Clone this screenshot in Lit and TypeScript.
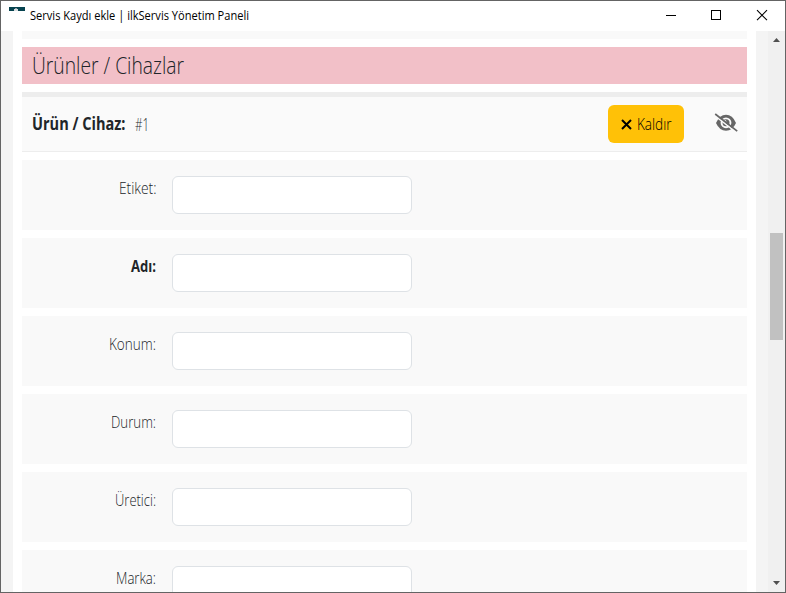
import { LitElement, html, css, svg } from "lit";
import { customElement, property } from "lit/decorators.js";

/* Single line of condensed text, set to an exact advance width. */
@customElement("narrow-text")
class NarrowText extends LitElement {
  @property() text = "";
  @property({ type: Number }) width = 100;
  @property({ type: Number }) size = 16;
  @property({ type: Number }) weight = 300;
  static styles = css`
    :host { display: block; flex: none; }
    svg { display: block; overflow: visible; }
    text { font-family: "Open Sans", "Noto Sans", sans-serif; fill: currentColor; }
  `;
  render() {
    const h = Math.round(this.size * 1.5);
    return html`<svg width=${this.width} height=${h}>${svg`<text x="0" y=${h - Math.round(this.size * 0.4)}
      font-size=${this.size} font-weight=${this.weight} textLength=${this.width}
      lengthAdjust="spacingAndGlyphs">${this.text}</text>`}</svg>`;
  }
}

@customElement("form-row")
class FormRow extends LitElement {
  @property() label = "";
  @property({ type: Number }) width = 40;
  @property({ type: Boolean }) required = false;
  static styles = css`
    :host { display: flex; flex: none; box-sizing: border-box; height: 70px; padding-top: 16px; background: #f9f9f9; color: #212529; }
    .label { width: 134px; margin-right: 16px; display: flex; justify-content: flex-end; }
    .field { box-sizing: border-box; width: 240px; height: 38px; margin: 0; border: 1px solid #dee2e6; border-radius: 6px; background: #fff; outline: none; }
  `;
  render() {
    return html`
      <div class="label"><narrow-text .text=${this.label} .width=${this.width} .weight=${this.required ? 700 : 300}></narrow-text></div>
      <input class="field" type="text" aria-label=${this.label} />`;
  }
}

const ROWS = [
  { label: "Etiket:", width: 37.5 },
  { label: "Adı:", width: 25, required: true },
  { label: "Konum:", width: 47 },
  { label: "Durum:", width: 45 },
  { label: "Üretici:", width: 41 },
  { label: "Marka:", width: 40 },
];

@customElement("app-root")
class AppRoot extends LitElement {
  static styles = css`
    :host { display: block; }
    .window { box-sizing: border-box; width: 786px; height: 593px; border: 1px solid #646464; background: #fff; display: flex; flex-direction: column; overflow: hidden; color: #212529; }
    .bar { flex: none; height: 30px; display: flex; align-items: flex-start; color: #000; }
    .favicon { margin: 6px 5px 0 8px; display: block; }
    .bar narrow-text { margin-top: 6px; }
    .controls { margin-left: auto; display: block; }
    .body { flex: 1; min-height: 0; display: flex; background: #f4f4f4; }
    .page { width: 725px; margin-left: 12px; margin-right: 12px; padding: 0 9px; background: #fff; display: flex; flex-direction: column; gap: 8px; overflow: hidden; }
    .previous { flex: none; height: 8px; background: #f9f9f9; }
    .section { flex: none; height: 37px; background: #f2c0c8; padding: 1px 0 0 10px; box-sizing: border-box; }
    .device { flex: none; box-sizing: border-box; height: 60px; border-top: 5px solid #ededed; border-bottom: 1px solid #ededed; background: #fafafa; display: flex; align-items: center; padding: 0 9px 0 10px; }
    .number { margin-left: 9px; }
    .remove { margin-left: auto; box-sizing: border-box; width: 76px; height: 38px; padding: 0 0 0 13px; border: 0; border-radius: 6px; background: #ffc107; color: #000; display: flex; align-items: center; gap: 5px; }
    .eye { margin: 0 0 2px 30px; display: block; }
    .scroll { width: 17px; background: #f0f0f0; display: flex; flex-direction: column; align-items: flex-start; }
    .scroll svg { display: block; flex: none; }
    .thumb { width: 13px; height: 107px; margin: 185px 0 auto 2px; background: #c1c1c1; }
  `;
  render() {
    return html`
      <div class="window">
        <div class="bar">
          <svg class="favicon" width="16" height="4" shape-rendering="crispEdges">
            <rect width="16" height="4" fill="#06434f" />
            <rect x="5" y="2" width="4" height="2" fill="#d9dde0" /><rect x="6" y="1" width="2" height="1" fill="#8b9ba5" />
          </svg>
          <narrow-text .text=${"Servis Kaydı ekle | ilkServis Yönetim Paneli"} .width=${219} .size=${12} .weight=${400}></narrow-text>
          <svg class="controls" width="137" height="30" fill="none" stroke="#000">
            <path d="M18 14.5H28M63.5 9.5H72.5V18.5H63.5Z" shape-rendering="crispEdges" />
            <path d="M109 9.2 119 19.2M119 9.2 109 19.2" stroke-width="1.1" />
          </svg>
        </div>
        <div class="body">
          <div class="page">
            <div class="previous"></div>
            <div class="section"><narrow-text .text=${"Ürünler / Cihazlar"} .width=${152} .size=${23}></narrow-text></div>
            <div class="device">
              <narrow-text .text=${"Ürün / Cihaz:"} .width=${93.5} .size=${17} .weight=${700}></narrow-text>
              <narrow-text class="number" .text=${"#1"} .width=${14} .size=${18}></narrow-text>
              <button class="remove">
                <svg width="11" height="11" stroke="#000" stroke-width="2"><path d="M1 1 10 10M10 1 1 10" /></svg>
                <narrow-text .text=${"Kaldır"} .width=${34.5} .size=${16}></narrow-text>
              </button>
              <svg class="eye" width="24" height="20">
                <path d="M2 10Q5.5 1.8 12 1.8T22 10Q18.500 17.800 12 17.800T2 10Z" fill="#666" />
                <circle cx="12" cy="9.800" r="5.400" fill="#fafafa" />
                <circle cx="12" cy="9.800" r="3.500" fill="#666" />
                <circle cx="11" cy="8.400" r="1.300" fill="#fafafa" />
                <path d="M.4 2.400 22 19.200" stroke="#fafafa" stroke-width="1.500" />
                <path d="M1.200 1 23.200 18.200" stroke="#666" stroke-width="1.700" />
              </svg>
            </div>
            ${ROWS.map((r) => html`<form-row .label=${r.label} .width=${r.width} .required=${!!r.required}></form-row>`)}
          </div>
          <div class="scroll">
            <svg width="17" height="17"><path d="M5 11H12L8.5 7Z" fill="#505050" /></svg>
            <div class="thumb"></div>
            <svg width="17" height="17"><path d="M5 6H12L8.5 10Z" fill="#505050" /></svg>
          </div>
        </div>
      </div>`;
  }
}
